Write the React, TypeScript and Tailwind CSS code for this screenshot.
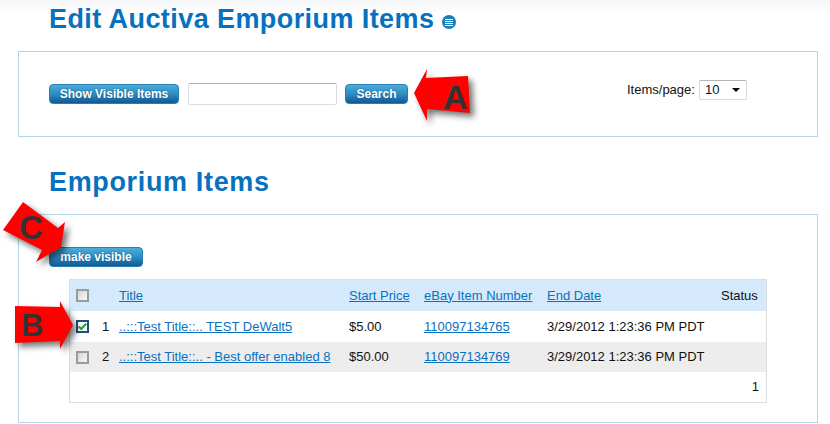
import React from "react";

function Arrow({ points, letter, lx, ly, size }: { points: string; letter: string; lx: string; ly: string; size: string }) {
  return (
    <div className="pointer-events-none absolute left-0 top-0 h-[424px] w-[830px]">
      <svg width="830" height="424" className="absolute left-0 top-0 drop-shadow-[4px_4px_3px_rgba(0,0,0,0.55)]">
        <polygon points={points} fill="#ff0000" />
      </svg>
      <span className={"absolute font-bold leading-none text-[#333333] " + lx + " " + ly + " " + size}>{letter}</span>
    </div>
  );
}

function BlueButton({ children, className }: { children: React.ReactNode; className: string }) {
  return (
    <button className={"flex h-[20px] items-center justify-center rounded-[4px] border border-[#2a7fb0] bg-gradient-to-b from-[#4aaedc] via-[#2f8dc2] to-[#0e5a96] text-[12px] font-bold text-white [text-shadow:0_0_2px_rgba(0,50,90,0.6)] " + className}>
      {children}
    </button>
  );
}

function Check({ checked }: { checked?: boolean }) {
  return (
    <div className={"flex h-[13px] w-[13px] items-center justify-center border-[2px] " + (checked ? "border-[#1c4f7c] bg-white" : "border-[#9a9b9b] bg-gradient-to-br from-[#d4d6d8] to-[#f7f8f8]")}>
      {checked && (
        <svg width="9" height="9" viewBox="0 0 9 9">
          <path d="M0.8 4.5 L3.2 7 L8.2 1.8" fill="none" stroke="#22a33a" strokeWidth="2.2" />
        </svg>
      )}
    </div>
  );
}

const link = "text-[#0a70c0] underline";

export default function App() {
  return (
    <div className="relative h-[424px] w-[830px] overflow-hidden bg-white text-[13px] text-[#111111] [font-family:'Liberation_Sans',Arial,sans-serif]">
      <div className="absolute inset-x-0 top-0 h-[14px] bg-gradient-to-b from-[#f5f6fa] to-white" />
      <div className="relative flex h-[51px] items-start pl-[49px] pt-[4px]">
        <h1 className="text-[27px] font-bold leading-[31px] tracking-[0.42px] text-[#0672bf]">Edit Auctiva Emporium Items</h1>
        <div className="ml-[8px] mt-[11px] flex h-[14px] w-[14px] flex-col items-center justify-center gap-[1px] rounded-full bg-[#1a7fb5]">
          <span className="h-[1px] w-[8px] bg-white" />
          <span className="h-[1px] w-[8px] bg-white" />
          <span className="h-[1px] w-[8px] bg-white" />
          <span className="h-[1px] w-[8px] bg-white" />
        </div>
      </div>

      <div className="ml-[18px] flex h-[86px] w-[800px] items-center border border-[#b5d6e8] pl-[30px]">
        <BlueButton className="w-[130px]">Show Visible Items</BlueButton>
        <div className="ml-[9px] h-[22px] w-[149px] rounded-[2px] border border-[#d8dde3] border-t-[#b0b0b0] bg-white" />
        <BlueButton className="ml-[8px] w-[63px]">Search</BlueButton>
        <span className="mb-[8px] ml-[219px]">Items/page:</span>
        <div className="mb-[8px] ml-[4px] flex h-[20px] w-[48px] items-center justify-between rounded-[2px] border border-[#d5d8dc] border-t-[#b5b5b5] bg-white pl-[5px] pr-[6px]">
          <span>10</span>
          <span className="h-0 w-0 border-x-[4px] border-t-[4px] border-x-transparent border-t-black" />
        </div>
      </div>

      <h2 className="pl-[49px] pt-[30px] text-[27px] font-bold leading-[31px] tracking-[0.65px] text-[#0672bf]">Emporium Items</h2>

      <div className="ml-[18px] mt-[16px] h-[209px] w-[800px] border border-[#b5d6e8] pl-[30px] pt-[32px]">
        <BlueButton className="w-[94px]">make visible</BlueButton>
        <div className="ml-[20px] mt-[12px] w-[698px] border border-[#dedede]">
          <table className="w-[696px] table-fixed border-collapse">
            <colgroup>
              <col className="w-[28px]" />
              <col className="w-[21px]" />
              <col className="w-[230px]" />
              <col className="w-[75px]" />
              <col className="w-[123px]" />
              <col className="w-[174px]" />
              <col className="w-[45px]" />
            </colgroup>
            <tbody>
              <tr className="h-[31px] bg-[#d4eafc]">
                <td className="pl-[6px]"><Check /></td>
                <td />
                <td><a className={link}>Title</a></td>
                <td><a className={link}>Start Price</a></td>
                <td><a className={link}>eBay Item Number</a></td>
                <td><a className={link}>End Date</a></td>
                <td>Status</td>
              </tr>
              <tr className="h-[31px]">
                <td className="pl-[6px]"><Check checked /></td>
                <td className="pl-[4px]">1</td>
                <td><a className={link}>..:::Test Title::.. TEST DeWalt5</a></td>
                <td>$5.00</td>
                <td><a className={link}>110097134765</a></td>
                <td>3/29/2012 1:23:36 PM PDT</td>
                <td />
              </tr>
              <tr className="h-[30px] bg-[#ededed]">
                <td className="pl-[6px]"><Check /></td>
                <td className="pl-[4px]">2</td>
                <td><a className={link}>..:::Test Title::.. - Best offer enabled 8</a></td>
                <td>$50.00</td>
                <td><a className={link}>110097134769</a></td>
                <td>3/29/2012 1:23:36 PM PDT</td>
                <td />
              </tr>
              <tr className="h-[30px]">
                <td colSpan={7} className="pr-[7px] text-right">1</td>
              </tr>
            </tbody>
          </table>
        </div>
      </div>

      <Arrow points="414,93 427,69 426,78 468,76 470,113 427,109 427,121" letter="A" lx="left-[443px]" ly="top-[80px]" size="text-[34px]" />
      <Arrow points="73,325 60,301 60,307 15,306 15,343 60,341 60,349" letter="B" lx="left-[21px]" ly="top-[310px]" size="text-[31px]" />
      <Arrow points="23,202 3,230 42,250 36,262 61,247 65,222 58,228" letter="C" lx="left-[19px]" ly="top-[211px]" size="text-[33px]" />
    </div>
  );
}
